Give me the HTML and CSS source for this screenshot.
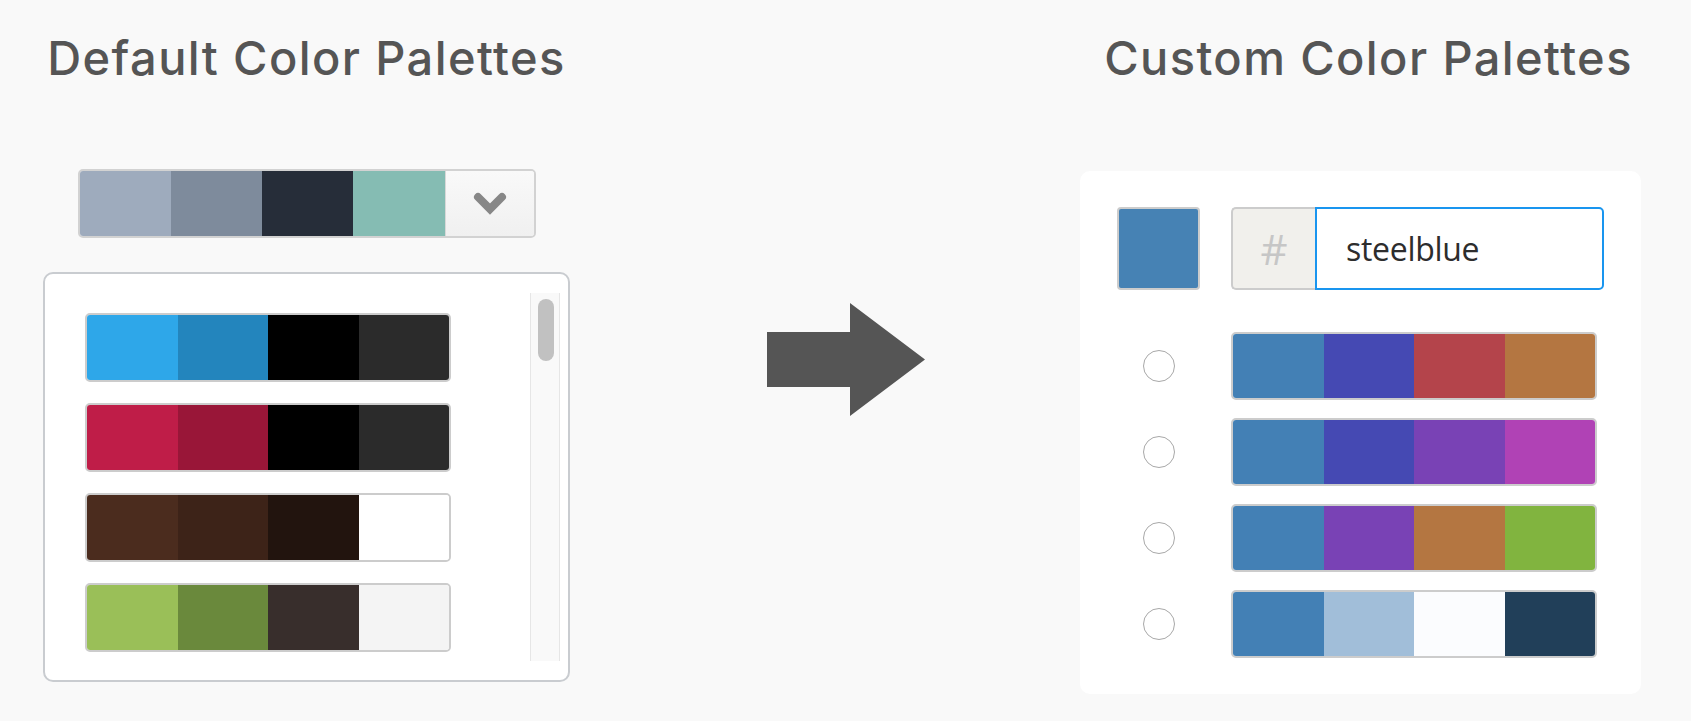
FILE: index.html
```html
<!DOCTYPE html>
<html>
<head>
<meta charset="utf-8">
<title>Color Palettes</title>
<link rel="stylesheet" href="styles.css">
</head>
<body>
<div class="page">
  <section class="left">
    <h1 class="title">Default Color Palettes</h1>
    <div class="dropdown">
      <span class="sw" style="background:#9eabbd"></span>
      <span class="sw" style="background:#7e8b9c"></span>
      <span class="sw" style="background:#262d39"></span>
      <span class="sw" style="background:#85bcb3"></span>
      <span class="dd-btn">
        <svg width="36" height="26" viewBox="0 0 36 26"><polyline points="6,6 18,18 30,6" fill="none" stroke="#878787" stroke-width="8" stroke-linejoin="miter" stroke-linecap="round"/></svg>
      </span>
    </div>
    <div class="list">
      <div class="rows">
        <div class="pal">
          <span class="sw" style="background:#2ea7e9"></span>
          <span class="sw" style="background:#2385bd"></span>
          <span class="sw" style="background:#000000"></span>
          <span class="sw" style="background:#2b2b2b"></span>
        </div>
        <div class="pal">
          <span class="sw" style="background:#bf1d48"></span>
          <span class="sw" style="background:#991638"></span>
          <span class="sw" style="background:#000000"></span>
          <span class="sw" style="background:#2b2b2b"></span>
        </div>
        <div class="pal">
          <span class="sw" style="background:#4b2c1e"></span>
          <span class="sw" style="background:#3d2318"></span>
          <span class="sw" style="background:#22140e"></span>
          <span class="sw" style="background:#ffffff"></span>
        </div>
        <div class="pal">
          <span class="sw" style="background:#9abf58"></span>
          <span class="sw" style="background:#6a893c"></span>
          <span class="sw" style="background:#382e2c"></span>
          <span class="sw" style="background:#f4f4f4"></span>
        </div>
      </div>
      <div class="track"><div class="thumb"></div></div>
    </div>
  </section>

  <div class="arrow">
    <svg width="158" height="113" viewBox="0 0 158 113"><polygon points="0,29 83,29 83,0 158,56.5 83,113 83,84 0,84" fill="#555555"/></svg>
  </div>

  <section class="right">
    <h1 class="title title-right">Custom Color Palettes</h1>
    <div class="card">
      <div class="crow">
        <div class="col1"><span class="big-swatch"></span></div>
        <div class="input-group">
          <span class="addon">#</span>
          <span class="input">steelblue</span>
        </div>
      </div>
      <div class="crow">
        <div class="col1"><span class="radio"></span></div>
        <div class="pal pal-r">
          <span class="sw" style="background:#4380b5"></span>
          <span class="sw" style="background:#4549b3"></span>
          <span class="sw" style="background:#b4444b"></span>
          <span class="sw" style="background:#b47641"></span>
        </div>
      </div>
      <div class="crow">
        <div class="col1"><span class="radio"></span></div>
        <div class="pal pal-r">
          <span class="sw" style="background:#4380b5"></span>
          <span class="sw" style="background:#4549b3"></span>
          <span class="sw" style="background:#7942b5"></span>
          <span class="sw" style="background:#b042b5"></span>
        </div>
      </div>
      <div class="crow">
        <div class="col1"><span class="radio"></span></div>
        <div class="pal pal-r">
          <span class="sw" style="background:#4380b5"></span>
          <span class="sw" style="background:#7942b5"></span>
          <span class="sw" style="background:#b47641"></span>
          <span class="sw" style="background:#81b43f"></span>
        </div>
      </div>
      <div class="crow">
        <div class="col1"><span class="radio"></span></div>
        <div class="pal pal-r">
          <span class="sw" style="background:#4380b5"></span>
          <span class="sw" style="background:#a1bed9"></span>
          <span class="sw" style="background:#fbfcfe"></span>
          <span class="sw" style="background:#213f59"></span>
        </div>
      </div>
    </div>
  </section>
</div>
</body>
</html>
```

FILE: styles.css
```css
* { box-sizing: border-box; }

html, body {
  margin: 0;
  padding: 0;
  background: #f9f9f9;
  font-family: "Open Sans", "Lato", sans-serif;
}

.page {
  display: flex;
  align-items: flex-start;
  padding-left: 43px;
}

.left {
  width: 527px;
  display: flex;
  flex-direction: column;
  align-items: center;
}

.title {
  margin: 0;
  padding-top: 34px;
  font-family: "Inter", "Open Sans", sans-serif;
  font-size: 47px;
  line-height: 47px;
  font-weight: 500;
  color: #555555;
  letter-spacing: 1.4px;
  white-space: nowrap;
  text-align: center;
}

.title-right {
  padding-left: 16px;
}

.dropdown {
  margin-top: 88px;
  width: 458px;
  height: 69px;
  display: flex;
  border: 2px solid #d2d2d2;
  border-radius: 5px;
  overflow: hidden;
}

.sw {
  flex: 1;
  display: block;
}

.dd-btn {
  width: 89px;
  display: flex;
  align-items: center;
  justify-content: center;
  background: linear-gradient(#f9f9f9, #f0f0f0);
  border-left: 1px solid #d8d8d8;
}

.list {
  margin-top: 34px;
  width: 527px;
  height: 410px;
  background: #ffffff;
  border: 2px solid #c9ccd0;
  border-radius: 10px;
  display: flex;
}

.rows {
  flex: 1;
  padding: 39px 0 0 40px;
  display: flex;
  flex-direction: column;
  gap: 21px;
}

.pal {
  width: 366px;
  height: 69px;
  display: flex;
  border: 2px solid #cccccc;
  border-radius: 5px;
  overflow: hidden;
}

.track {
  width: 30px;
  margin: 19px 8px 19px 0;
  background: #f9f9f9;
  border-left: 1px solid #e6e6e6;
  border-right: 1px solid #e6e6e6;
  padding: 6px 0 0 7px;
}

.thumb {
  width: 16px;
  height: 62px;
  border-radius: 8px;
  background: #c1c1c1;
}

.arrow {
  margin-left: 197px;
  margin-top: 303px;
  width: 158px;
  height: 113px;
}

.arrow svg { display: block; }

.right {
  margin-left: 155px;
  width: 561px;
  display: flex;
  flex-direction: column;
  align-items: center;
}

.card {
  margin-top: 90px;
  width: 561px;
  background: #ffffff;
  border-radius: 10px;
  padding: 36px 37px 36px 37px;
  display: flex;
  flex-direction: column;
  gap: 18px;
}

.crow {
  display: flex;
  align-items: center;
  gap: 31px;
}

.crow:first-child {
  margin-bottom: 24px;
}

.col1 {
  width: 83px;
  display: flex;
  justify-content: center;
}

.big-swatch {
  display: block;
  width: 83px;
  height: 83px;
  background: #4682b4;
  border: 2px solid #cccccc;
  border-radius: 4px;
}

.input-group {
  width: 373px;
  height: 83px;
  display: flex;
}

.addon {
  width: 84px;
  display: flex;
  align-items: center;
  justify-content: center;
  background: #f1f0ec;
  border: 2px solid #cccccc;
  border-right: none;
  border-radius: 5px 0 0 5px;
  color: #c6c6c6;
  font-family: "Open Sans", sans-serif;
  font-size: 42px;
}

.input {
  flex: 1;
  display: flex;
  align-items: center;
  padding-left: 29px;
  border: 2px solid #1995ef;
  border-radius: 0 5px 5px 0;
  background: #ffffff;
  color: #2d2d2d;
  font-family: "Open Sans", sans-serif;
  font-size: 32px;
  letter-spacing: -0.3px;
}

.radio {
  display: block;
  width: 32px;
  height: 32px;
  border-radius: 50%;
  border: 1px solid #a8a8a8;
  background: #ffffff;
}

.pal-r {
  height: 68px;
}
```
